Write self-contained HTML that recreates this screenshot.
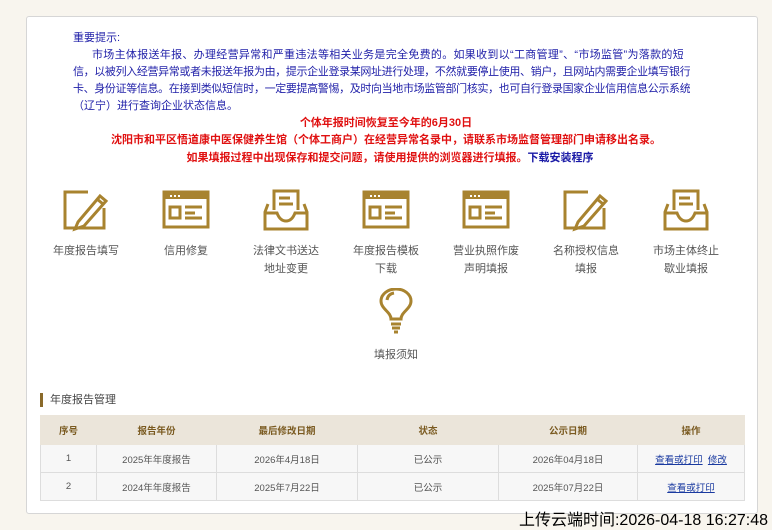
<!DOCTYPE html>
<html><head><meta charset="utf-8"><style>
*{margin:0;padding:0;box-sizing:border-box}
body{width:772px;height:530px;background:#f8f5ee;font-family:"Liberation Sans","Noto Sans CJK SC",sans-serif;position:relative;overflow:hidden}
.card{position:absolute;left:26px;top:16px;width:732px;height:498px;background:#fff;border:1px solid #d6d6d6;border-radius:3px}
.blue{position:absolute;left:73px;top:30px;width:617px;color:#1f1fa8;font-size:11px;line-height:17px;white-space:nowrap}
.blue .j{display:block;white-space:normal;text-align:justify;text-align-last:justify;letter-spacing:-0.7px;overflow:hidden;height:17px}
.red{position:absolute;left:0;width:772px;text-align:center;color:#e01010;font-size:11px;font-weight:bold}
.ic{position:absolute;width:100px;text-align:center;color:#555;font-size:11px;line-height:18px}
.ic svg{display:block;margin:0 auto 10px}
.sec{position:absolute;left:40px;top:393px;font-size:11px;color:#444;border-left:3px solid #8a6a2a;padding-left:7px;line-height:14px}
table{position:absolute;left:40px;top:415px;width:705px;border-collapse:collapse;font-size:9.5px;color:#555}
th{background:#ebe5da;color:#7a5a20;height:29px;font-weight:bold;border:1px solid #ebe5da}
td{background:#f7f7f7;border:1px solid #ddd;height:28px;text-align:center}
a{color:#1a3aa0;text-decoration:underline}
.ts{position:absolute;right:4px;top:506px;font-size:16px;color:#000}
</style></head><body>
<div class="card"></div>
<div class="blue">重要提示:<br><span class="j" style="padding-left:19px;width:610px">市场主体报送年报、办理经营异常和严重违法等相关业务是完全免费的。如果收到以“工商管理”、“市场监管”为落款的短</span><span class="j">信，以被列入经营异常或者未报送年报为由，提示企业登录某网址进行处理，不然就要停止使用、销户，且网站内需要企业填写银行</span><span class="j">卡、身份证等信息。在接到类似短信时，一定要提高警惕，及时向当地市场监管部门核实，也可自行登录国家企业信用信息公示系统</span>（辽宁）进行查询企业状态信息。</div>
<div class="red" style="top:114px">个体年报时间恢复至今年的6月30日</div>
<div class="red" style="top:131px">沈阳市和平区悟道康中医保健养生馆（个体工商户）在经营异常名录中，请联系市场监督管理部门申请移出名录。</div>
<div class="red" style="top:149px;left:4px">如果填报过程中出现保存和提交问题，请使用提供的浏览器进行填报。<span style="color:#1a1aa6">下载安装程序</span></div>

<svg width="0" height="0" style="position:absolute"><defs>
<g id="pen" fill="none" stroke="#a8832f" stroke-width="3"><path d="M26 4H3V40H42V20"/><path d="M16 34 L38 8 L44 13 L22 38 L13 41 Z"/><path d="M35 11 L41 16"/></g>
<g id="brw" fill="none" stroke="#a8832f" stroke-width="3"><rect x="2" y="4" width="44" height="35"/><rect x="3" y="5" width="42" height="6" fill="#a8832f" stroke="none"/><path d="M8 8h2M12 8h2M16 8h2" stroke="#fff" stroke-width="2"/><rect x="8" y="19" width="10" height="11"/><path d="M23 19h17M23 25h10M23 30h17"/></g>
<g id="box" fill="none" stroke="#a8832f" stroke-width="3"><path d="M6 16L3 24V41H45V24L42 16"/><path d="M3 25H15Q18 33 24 33Q30 33 33 25H45"/><path d="M12 22V3H36V22"/><path d="M17 10h11M17 16h14"/></g>
<g id="bulb" fill="none" stroke="#a8832f" stroke-width="3"><path d="M15 31 C15 24 5 21 5 13 A15 12 0 0 1 35 13 C35 21 25 24 25 31 Z"/><path d="M15 36h10M16 40h8M18 44h4"/><path d="M11 12Q12 6 18 5"/></g>
</defs></svg>

<div class="ic" style="left:36px;top:188px"><svg width="48" height="44"><use href="#pen"/></svg>年度报告填写</div>
<div class="ic" style="left:136px;top:188px"><svg width="48" height="44"><use href="#brw"/></svg>信用修复</div>
<div class="ic" style="left:236px;top:188px"><svg width="48" height="44"><use href="#box"/></svg>法律文书送达<br>地址变更</div>
<div class="ic" style="left:336px;top:188px"><svg width="48" height="44"><use href="#brw"/></svg>年度报告模板<br>下载</div>
<div class="ic" style="left:436px;top:188px"><svg width="48" height="44"><use href="#brw"/></svg>营业执照作废<br>声明填报</div>
<div class="ic" style="left:536px;top:188px"><svg width="48" height="44"><use href="#pen"/></svg>名称授权信息<br>填报</div>
<div class="ic" style="left:636px;top:188px"><svg width="48" height="44"><use href="#box"/></svg>市场主体终止<br>歇业填报</div>
<div class="ic" style="left:346px;top:288px"><svg width="40" height="48"><use href="#bulb"/></svg>填报须知</div>

<div class="sec">年度报告管理</div>
<table>
<tr><th style="width:56px">序号</th><th style="width:120px">报告年份</th><th style="width:141px">最后修改日期</th><th style="width:141px">状态</th><th style="width:139px">公示日期</th><th>操作</th></tr>
<tr><td>1</td><td>2025年年度报告</td><td>2026年4月18日</td><td>已公示</td><td>2026年04月18日</td><td><a>查看或打印</a>&nbsp;&nbsp;<a>修改</a></td></tr>
<tr><td>2</td><td>2024年年度报告</td><td>2025年7月22日</td><td>已公示</td><td>2025年07月22日</td><td><a>查看或打印</a></td></tr>
</table>
<div class="ts">上传云端时间:2026-04-18 16:27:48</div>
</body></html>
